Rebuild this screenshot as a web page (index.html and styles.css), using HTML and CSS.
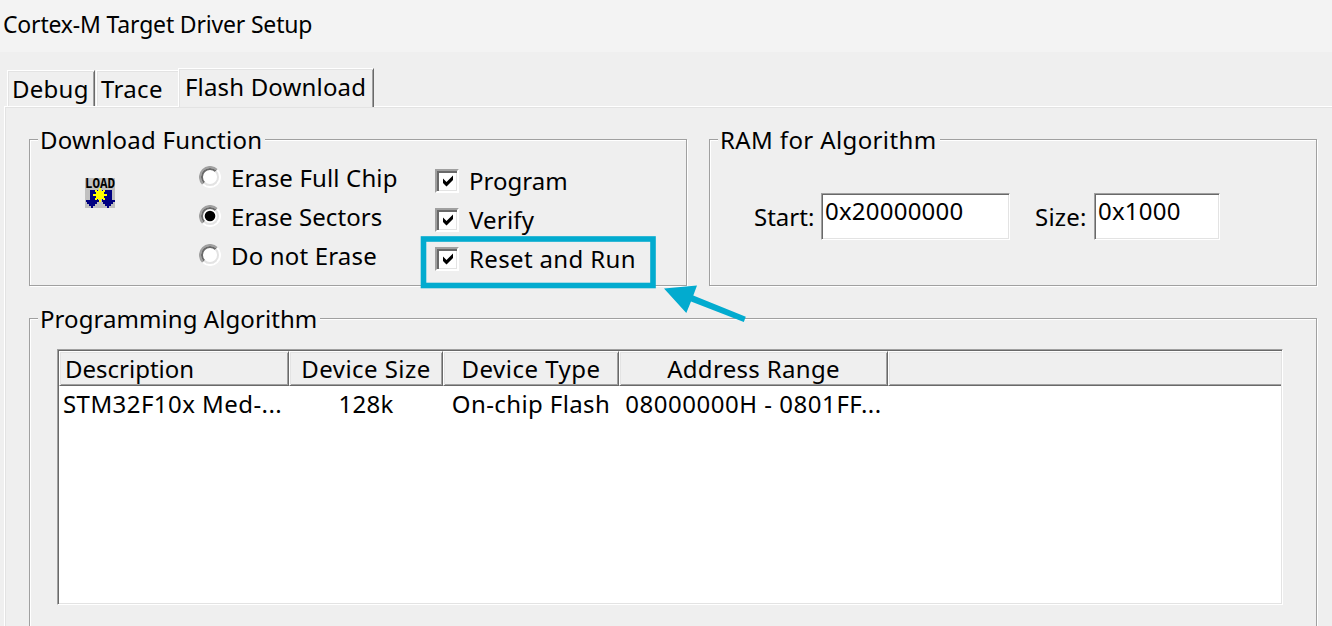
FILE: index.html
```html
<!DOCTYPE html>
<html lang="en">
<head>
<meta charset="utf-8">
<title>Cortex-M Target Driver Setup</title>
<link rel="stylesheet" href="styles.css">
</head>
<body>
<header class="titlebar">Cortex-M Target Driver Setup</header>
<nav class="tabs">
  <div class="tab tab-debug">Debug</div>
  <div class="tab tab-trace">Trace</div>
  <div class="tab tab-flash">Flash Download</div>
</nav>
<main class="page">
  <div class="top-row">
    <section class="group group-download">
      <h2 class="legend"><span class="t-df">Download Function</span></h2>
      <div class="options">
        <svg class="load-icon" width="30" height="30" viewBox="0 0 30 30" shape-rendering="crispEdges">
          <rect width="30" height="30" fill="#c0c0c0"/>
          <text x="0" y="9.5" class="load-text" textLength="30" lengthAdjust="spacingAndGlyphs">LOAD</text>
          <path d="M5 12H13V22H14V24H12V26H10V28H8V30H6V28H4V26H2V24H1V22H5ZM17 12H27V22H30V24H28V26H26V28H24V30H22V28H20V26H18V24H17Z" fill="#000080"/>
          <path d="M14 10H16V13H18V12H20V14H19V16H22V18H19V20H20V22H18V21H16V24H14V21H12V22H10V20H11V18H8V16H11V14H10V12H12V13H14Z" fill="#ff0"/>
        </svg>
        <div class="radios">
          <label class="radio"><svg class="dot" viewBox="0 0 22 22"><use href="#ring"/></svg><span class="t-efc">Erase Full Chip</span></label>
          <label class="radio"><svg class="dot" viewBox="0 0 22 22"><use href="#ring"/><circle cx="11" cy="11" r="5.3"/></svg><span class="t-es">Erase Sectors</span></label>
          <label class="radio"><svg class="dot" viewBox="0 0 22 22"><use href="#ring"/></svg><span class="t-dne">Do not Erase</span></label>
        </div>
        <div class="checks">
          <label class="check"><span class="box"><svg viewBox="0 0 12 12"><path d="M1 3.5L4.5 7L11 .5V5L4.5 11.5L1 8Z"/></svg></span><span class="t-prog">Program</span></label>
          <label class="check"><span class="box"><svg viewBox="0 0 12 12"><path d="M1 3.5L4.5 7L11 .5V5L4.5 11.5L1 8Z"/></svg></span><span class="t-ver">Verify</span></label>
          <label class="check"><span class="box"><svg viewBox="0 0 12 12"><path d="M1 3.5L4.5 7L11 .5V5L4.5 11.5L1 8Z"/></svg></span><span class="t-rr">Reset and Run</span></label>
        </div>
      </div>
    </section>
    <section class="group group-ram">
      <h2 class="legend"><span class="t-ram">RAM for Algorithm</span></h2>
      <div class="fields">
        <span class="field-label t-start">Start:</span>
        <div class="input input-start"><span class="t-in">0x20000000</span></div>
        <span class="field-label t-size">Size:</span>
        <div class="input input-size"><span class="t-in">0x1000</span></div>
      </div>
    </section>
  </div>
  <section class="group group-prog">
    <h2 class="legend"><span class="t-pa">Programming Algorithm</span></h2>
    <div class="list">
      <div class="row head">
        <div class="cell first"><span>Description</span></div>
        <div class="cell"><span class="t-ds">Device Size</span></div>
        <div class="cell"><span class="t-dt">Device Type</span></div>
        <div class="cell"><span class="t-ar">Address Range</span></div>
        <div class="cell last"></div>
      </div>
      <div class="row data">
        <div class="item first"><span class="t-stm">STM32F10x Med-...</span></div>
        <div class="item"><span class="t-128">128k</span></div>
        <div class="item"><span class="t-chip">On-chip Flash</span></div>
        <div class="item"><span class="t-addr">08000000H - 0801FF...</span></div>
      </div>
    </div>
  </section>
</main>
<svg class="annotation" width="332" height="92" viewBox="418 234 332 92">
  <rect x="423.5" y="239" width="229.5" height="46.5" fill="none" stroke="#02abcf" stroke-width="5.6"/>
  <path d="M664 288.5L697 285.5L693.3 295.5L745.8 316.8L743.8 322L691 301.5L686.3 313Z" fill="#02abcf"/>
</svg>
<svg class="defs" width="0" height="0">
  <g id="ring">
    <circle cx="11" cy="11" r="9" fill="#fff"/>
    <g fill="none" stroke-width="2">
      <path d="M3.9 18.1A10 10 0 0 1 18.1 3.9" stroke="#a0a0a0"/>
      <path d="M3.9 18.1A10 10 0 0 0 18.1 3.9" stroke="#fff"/>
      <path d="M5.3 16.7A8 8 0 0 1 16.7 5.3" stroke="#696969"/>
      <path d="M5.3 16.7A8 8 0 0 0 16.7 5.3" stroke="#e3e3e3"/>
    </g>
  </g>
</svg>
</body>
</html>
```
FILE: styles.css
```css
* { box-sizing: border-box; }
body {
  margin: 0;
  width: 1332px;
  height: 626px;
  overflow: hidden;
  position: relative;
  background: #efefef;
  color: #000;
  font-family: "Noto Sans", sans-serif;
  font-size: 24px;
  line-height: 32px;
  white-space: nowrap;
}
.titlebar { height: 52px; padding: 8px 0 0 3px; background: #f3f3f3; font-size: 23px; letter-spacing: -0.18px; }
.tabs { display: flex; align-items: flex-end; height: 54px; padding-left: 7px; }
.tab { height: 36px; border-top: 1px solid #fff; border-left: 1px solid #fff; box-shadow: inset 1px 1px #e3e3e3; }
.tab-debug { width: 88px; padding: 2px 0 0 4px; border-right: 1px solid #696969; box-shadow: inset 1px 1px #e3e3e3, inset -1px 0 #a0a0a0; letter-spacing: 0.25px; }
.tab-trace { width: 82px; margin-left: 1px; padding: 2px 0 0 4px; letter-spacing: 0.35px; }
.tab-flash { position: relative; width: 196px; height: 39px; margin-bottom: -1px; padding: 2px 0 0 6px; background: #efefef; border-right: 1px solid #696969; box-shadow: inset 1px 1px #e3e3e3, inset -1px 0 #a0a0a0; letter-spacing: 0.16px; }
.page { margin-left: 4px; height: 520px; padding: 32px 0 0 24px; border-left: 1px solid #fff; border-top: 1px solid #fff; box-shadow: inset 1px 1px #e3e3e3; }
.top-row { display: flex; gap: 22px; }
.group { border: 1px solid #a0a0a0; box-shadow: 1px 1px #fff, inset 1px 1px #fff; }
.group-download { width: 658px; height: 147px; }
.group-ram { width: 608px; height: 147px; }
.group-prog { width: 1288px; height: 330px; margin-top: 32px; }
.legend { margin: -16px 0 0 8px; padding: 0 3px 0 2px; width: fit-content; height: 32px; background: #efefef; font-size: 24px; font-weight: 400; }
.options { display: flex; }
.load-icon { margin: 22px 0 0 55px; overflow: visible; }
.load-text { font: bold 14px "Liberation Mono", monospace; }
.radios { margin: 6px 0 0 84px; width: 236px; }
.radio { display: flex; height: 39px; gap: 10px; }
.dot { width: 22px; height: 22px; margin-top: 4px; }
.checks { margin-top: 9px; }
.check { display: flex; height: 39px; gap: 10px; }
.box { width: 24px; height: 24px; margin-top: 4px; background: #fff; border: 2px solid; border-color: #a0a0a0 #fff #fff #a0a0a0; box-shadow: inset 2px 2px #696969, inset -1px -1px #e3e3e3; }
.box svg { display: block; width: 12px; height: 12px; margin: 4px 0 0 5px; }
.fields { display: flex; padding: 37px 0 0 44px; }
.field-label { margin-top: 8px; }
.t-start { width: 67px; }
.t-size { width: 59px; margin-left: 25px; letter-spacing: 0.2px; }
.input, .list { background: #fff; border: 1px solid; border-color: #a0a0a0 #fff #fff #a0a0a0; box-shadow: inset 1px 1px #696969, inset -1px -1px #e3e3e3; }
.input { height: 47px; padding: 1px 0 0 3px; }
.input-start { width: 189px; }
.input-size { width: 126px; }
.list { width: 1226px; height: 256px; margin: 14px 0 0 27px; padding: 1px; }
.row { display: grid; grid-template-columns: 230px 154px 176px 269px 393px; }
.cell { height: 35px; padding-top: 1px; text-align: center; background: #efefef; border: 1px solid; border-color: #fff #696969 #696969 #fff; box-shadow: inset 1px 1px #e3e3e3, inset -1px -1px #a0a0a0; }
.cell.first { text-align: left; padding-left: 5px; }
.cell.last { border-right: 0; box-shadow: inset 1px 1px #e3e3e3, inset 0 -1px #a0a0a0; }
.item { padding-top: 2px; text-align: center; }
.item.first { text-align: left; padding-left: 4px; }
.t-df { letter-spacing: 0.23px; }
.t-pa { letter-spacing: 0.07px; }
.t-ram { letter-spacing: 0.38px; }
.t-efc { letter-spacing: 0.15px; }
.t-es { letter-spacing: 0.08px; }
.t-dne { letter-spacing: 0.17px; }
.t-ver { letter-spacing: 0.2px; }
.t-rr { letter-spacing: 0.35px; }
.t-in { letter-spacing: 0.22px; }
.t-ds { letter-spacing: 0.45px; }
.t-dt { letter-spacing: 0.5px; }
.t-ar { letter-spacing: 0.32px; }
.t-stm { letter-spacing: 0.44px; }
.t-128 { letter-spacing: 0.3px; }
.t-chip { letter-spacing: 0.4px; }
.t-addr { letter-spacing: 0.53px; }
.annotation { position: absolute; left: 418px; top: 234px; }
.defs { position: absolute; }
```
